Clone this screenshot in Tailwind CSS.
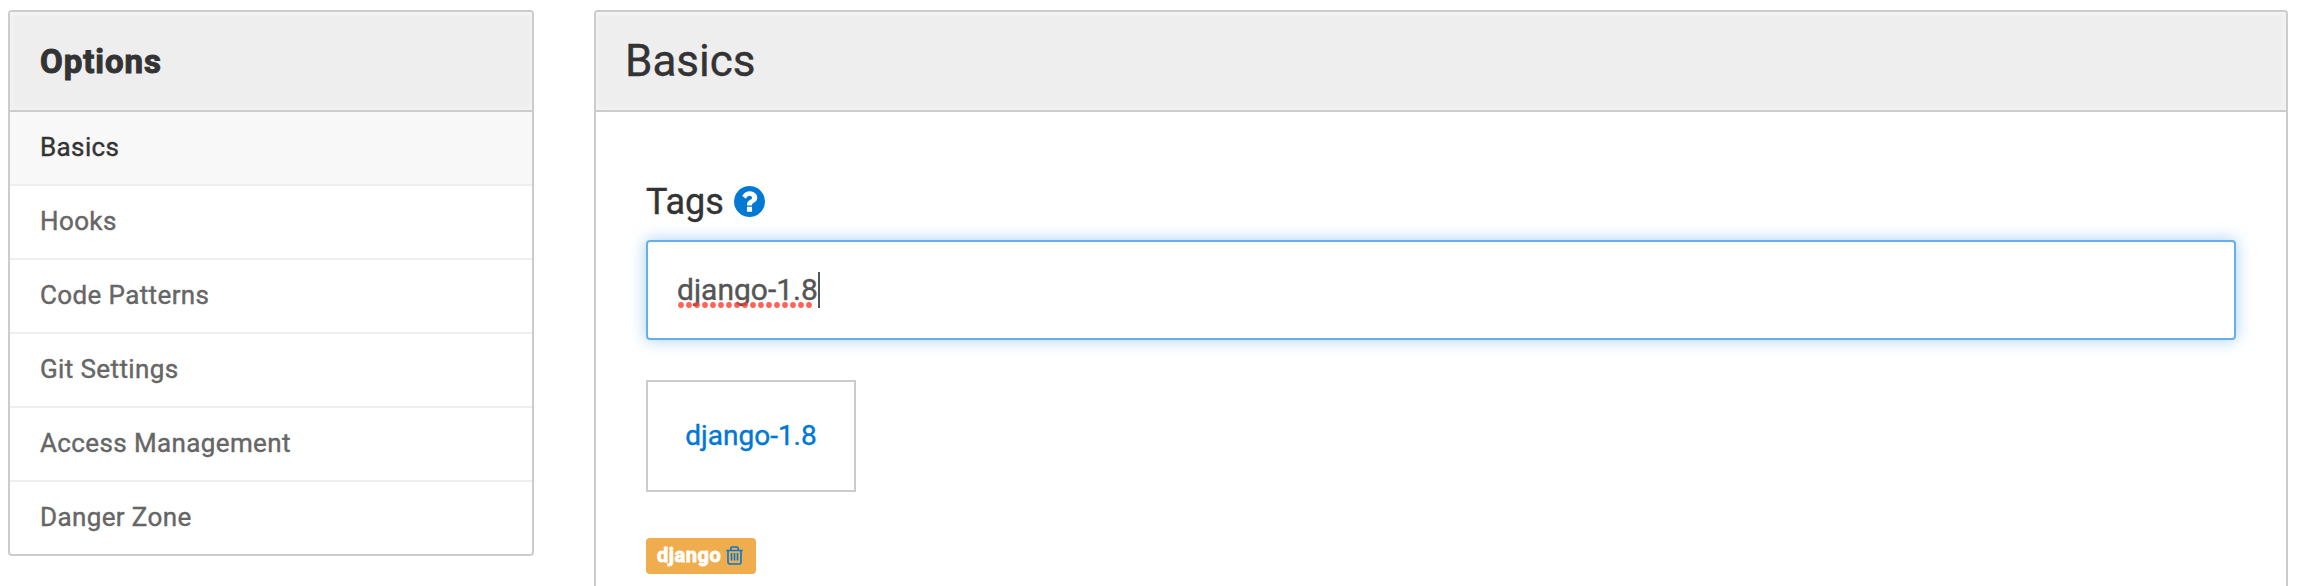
<!DOCTYPE html>
<html lang="en">
<head>
<meta charset="utf-8">
<title>Options</title>
<script src="https://cdn.jsdelivr.net/npm/@tailwindcss/browser@4"></script>
</head>
<body class="h-screen overflow-hidden bg-white font-['Roboto',sans-serif] text-[#333] antialiased">
<div class="flex h-full items-start gap-[60px] overflow-hidden pt-2.5 pl-2 pr-2.5">
  <nav class="w-[526px] shrink-0 overflow-hidden rounded-[4px] border-2 border-[#ccc]">
    <h2 class="flex h-[100px] items-center border-b-2 border-[#ccc] bg-[#eee] pt-[2px] pl-[30px] text-[33px] font-bold tracking-[0.95px] shadow-[inset_0_1px_6px_#f8f8f8] [-webkit-text-stroke:1px_#333]"><span>Options</span></h2>
    <ul class="divide-y-2 divide-[#eee] text-[26px] leading-[71px] tracking-[0.38px] text-[#666] [-webkit-text-stroke:0.4px_currentColor]">
      <li class="box-content h-[72px] bg-[#f8f8f8] pl-[30px] text-[#333]">Basics</li>
      <li class="box-content h-[72px] pl-[30px]">Hooks</li>
      <li class="box-content h-[72px] pl-[30px]">Code Patterns</li>
      <li class="box-content h-[72px] pl-[30px]">Git Settings</li>
      <li class="box-content h-[72px] pl-[30px]">Access Management</li>
      <li class="box-content h-[72px] pl-[30px]">Danger Zone</li>
    </ul>
  </nav>
  <main class="h-[576px] min-w-0 flex-1 overflow-hidden rounded-t-[4px] border-2 border-b-0 border-[#ccc]">
    <h1 class="flex h-[100px] items-center border-b-2 border-[#ccc] bg-[#eee] pl-[29px] text-[44px] shadow-[inset_0_1px_6px_#f8f8f8] [-webkit-text-stroke:0.4px_currentColor]"><span>Basics</span></h1>
    <div class="flex flex-col items-start pt-[64px] pr-[50px] pl-[50px] [-webkit-text-stroke:0.4px_currentColor]">
      <div class="flex h-[50px] items-center gap-[10px] pt-px text-[36px]">
        <span>Tags</span>
        <svg class="size-[31px]" viewBox="0 0 1536 1536" fill="#0078d4" stroke="none"><path d="M896 1248v-192q0-14-9-23t-23-9H672q-14 0-23 9t-9 23v192q0 14 9 23t23 9h192q14 0 23-9t9-23zm256-672q0-88-55.500-163T958 297t-170-41q-243 0-371 213-15 24 8 42l132 100q7 6 19 6 16 0 25-12 53-68 86-92 34-24 86-24 48 0 85.500 26t37.500 59q0 38-20 61t-68 45q-63 28-115.500 86.500T640 892v36q0 14 9 23t23 9h192q14 0 23-9t9-23q0-19 21.500-49.500T972 829q32-18 49-28.500t46-35 44.500-48 28-60.500 12.500-81zm384 192q0 209-103 385.500T1153.500 1433 768 1536t-385.500-103T103 1153.500 0 768t103-385.500T382.500 103 768 0t385.500 103T1433 382.500 1536 768z"/></svg>
      </div>
      <div class="mt-[14px] flex h-[100px] w-full items-center rounded-[4px] border-2 border-[#66afe9] pl-[29px] text-[30px] text-[#555] shadow-[inset_0_2px_2px_rgba(0,0,0,0.03),0_0_16px_rgba(102,175,233,0.6)]">
        <span class="relative -mt-px">django-1.8<svg class="absolute top-[35px] left-[1px] h-[6px] w-[136px]" viewBox="0 0 136 6"><path d="M3 3H132" stroke="#ff3b30" stroke-opacity=".8" stroke-width="5.800" stroke-linecap="round" stroke-dasharray="0.010 7.990"/></svg></span>
        <span class="h-9 w-0.5 bg-[#555]"></span>
      </div>
      <div class="mt-10 flex h-[112px] w-[210px] items-center justify-center border-2 border-[#ccc] text-[28px] text-[#0078d4]"><span>django-1.8</span></div>
      <div class="mt-[46px] flex h-9 w-[110px] items-center gap-[5px] rounded-[4px] bg-[#f0ad4e] pb-0.5 pl-[11px] text-[20px] font-bold tracking-[0.55px] text-white [-webkit-text-stroke:0.8px_currentColor]">
        <span>django</span>
        <svg class="h-[19px] w-[17px]" viewBox="0 0 17 19" fill="none" stroke="#0078d4" stroke-width="1.600"><path d="M.3 4.500h16.400M4.800 4V2.200Q5 1 6.200 1h4.600q1.200 0 1.400 1.200V4M2 4.500v12q.2 1.500 1.500 1.500h10q1.300 0 1.500-1.500v-12M5.500 7v7.500M8.500 7v7.500M11.500 7v7.500"/></svg>
      </div>
    </div>
  </main>
</div>
</body>
</html>
